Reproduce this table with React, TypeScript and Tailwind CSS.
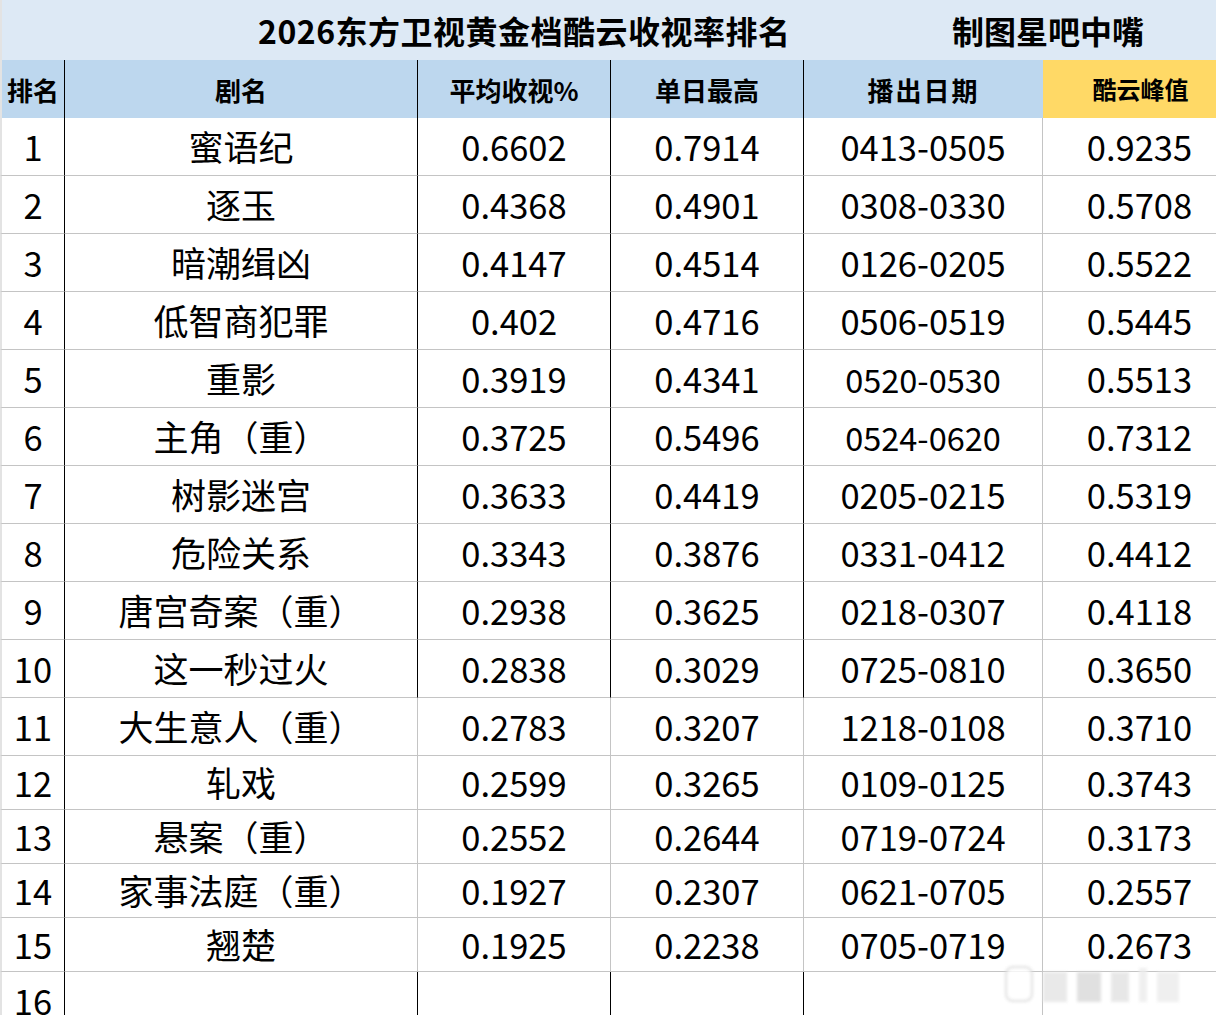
const rows: [string, string, string, string, string][] = [
  ["蜜语纪", "0.6602", "0.7914", "0413-0505", "0.9235"],
  ["逐玉", "0.4368", "0.4901", "0308-0330", "0.5708"],
  ["暗潮缉凶", "0.4147", "0.4514", "0126-0205", "0.5522"],
  ["低智商犯罪", "0.402", "0.4716", "0506-0519", "0.5445"],
  ["重影", "0.3919", "0.4341", "0520-0530", "0.5513"],
  ["主角（重）", "0.3725", "0.5496", "0524-0620", "0.7312"],
  ["树影迷宫", "0.3633", "0.4419", "0205-0215", "0.5319"],
  ["危险关系", "0.3343", "0.3876", "0331-0412", "0.4412"],
  ["唐宫奇案（重）", "0.2938", "0.3625", "0218-0307", "0.4118"],
  ["这一秒过火", "0.2838", "0.3029", "0725-0810", "0.3650"],
  ["大生意人（重）", "0.2783", "0.3207", "1218-0108", "0.3710"],
  ["轧戏", "0.2599", "0.3265", "0109-0125", "0.3743"],
  ["悬案（重）", "0.2552", "0.2644", "0719-0724", "0.3173"],
  ["家事法庭（重）", "0.1927", "0.2307", "0621-0705", "0.2557"],
  ["翘楚", "0.1925", "0.2238", "0705-0719", "0.2673"],
  ["", "", "", "", ""],
];

const cols = "grid grid-cols-[65px_353px_193px_193px_239px_173px]";

const App = () => {
  return (
    <div
      className="relative w-[1216px] h-[1015px] overflow-hidden bg-white text-black"
      style={{ fontFamily: '"Noto Sans CJK SC", "Noto Sans", sans-serif' }}
    >
      {/* title */}
      <div className="flex h-[60px] items-center bg-[#dde9f5] border-l-2 border-[#e3e3e3]">
        <span className="ml-[256px] text-[32px] font-bold tracking-[0.5px]">
          2026东方卫视黄金档酷云收视率排名
        </span>
        <span className="ml-auto mr-[72px] text-[32px] font-bold">制图星吧中嘴</span>
      </div>

      {/* header */}
      <div className={`${cols} h-[58px] text-[26px] font-bold`}>
        <div className="flex items-center justify-center bg-[#bdd7ee] border-r border-black border-l-2 border-l-[#e3e3e3]">
          排名
        </div>
        <div className="flex items-center justify-center bg-[#bdd7ee] border-r border-black">剧名</div>
        <div className="flex items-center justify-center bg-[#bdd7ee] border-r border-black">平均收视%</div>
        <div className="flex items-center justify-center bg-[#bdd7ee] border-r border-black">单日最高</div>
        <div className="flex items-center justify-center bg-[#bdd7ee] tracking-[2px]">播出日期</div>
        <div className="flex items-center justify-center bg-[#ffd966] pl-[22px] text-[24px]">酷云峰值</div>
      </div>

      {/* data */}
      {rows.map((r, i) => {
        const n = i + 1;
        const grey = n >= 11 && n <= 15;
        const mid = grey ? "border-r border-[#c4c4c4]" : "border-r border-black";
        const h = n <= 11 || n === 16 ? "h-[58px]" : "h-[54px]";
        const small = n === 5 || n === 6;
        return (
          <div key={n} className={`${cols} ${h} text-[34.5px]`}>
            <div className="flex items-center justify-center border-b border-b-[#c4c4c4] border-r border-r-black border-l-2 border-l-[#e3e3e3] pt-[1px]">
              {n}
            </div>
            <div className={`flex items-center justify-center border-b border-b-[#c4c4c4] text-[35px] ${mid}`}>
              {r[0]}
            </div>
            <div className={`flex items-center justify-center border-b border-b-[#c4c4c4] pt-[1px] ${mid}`}>{r[1]}</div>
            <div className={`flex items-center justify-center border-b border-b-[#c4c4c4] pt-[1px] ${mid}`}>{r[2]}</div>
            <div
              className={`flex items-center justify-center border-b border-b-[#c4c4c4] border-r border-r-[#c4c4c4] pt-[1px] ${
                small ? "text-[32.5px]" : ""
              }`}
            >
              {r[3]}
            </div>
            <div className="flex items-center justify-center border-b border-b-[#c4c4c4] pl-[20px] pt-[1px]">{r[4]}</div>
          </div>
        );
      })}

      {/* blurred watermark */}
      <div className="absolute left-[1005px] top-[966px] flex items-end gap-[10px] opacity-80 blur-[1.5px]">
        <div className="h-[36px] w-[28px] rounded-[8px] border-2 border-[#d8d8d8] bg-white" />
        <div className="h-[30px] w-[24px] bg-[#e4e4e4]" />
        <div className="h-[30px] w-[24px] bg-[#d9d9d9]" />
        <div className="h-[30px] w-[18px] bg-[#e2e2e2]" />
        <div className="h-[34px] w-[8px] bg-[#ececec]" />
        <div className="h-[30px] w-[22px] bg-[#ececec]" />
      </div>
    </div>
  );
};

export default App;
